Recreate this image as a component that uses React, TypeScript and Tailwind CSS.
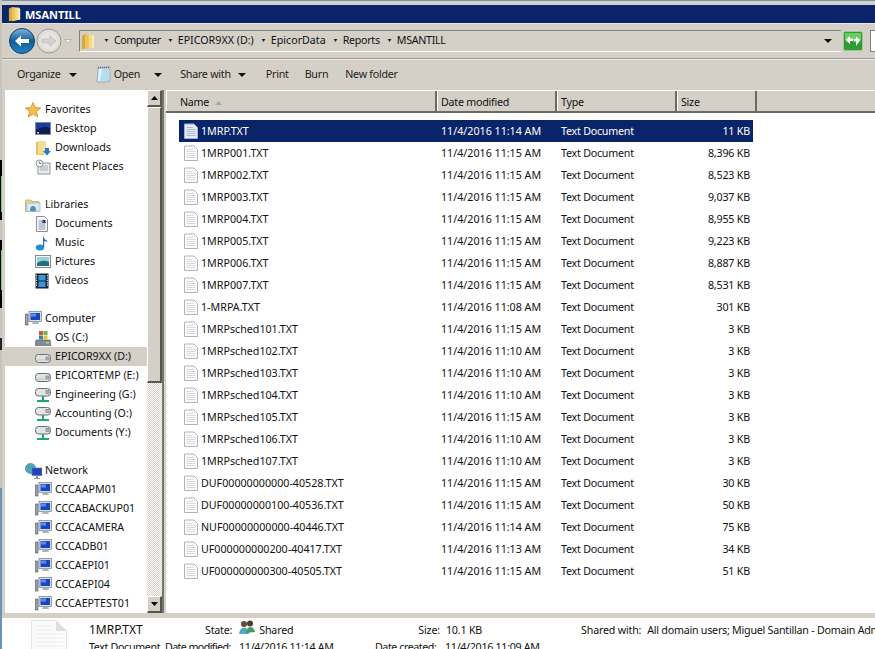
import React from "react";

const font = "font-['Noto_Sans','Liberation_Sans',sans-serif]";

function FolderIcon({ className = "size-4" }: { className?: string }) {
  return (
    <svg viewBox="0 0 16 20" className={className}>
      <path d="M1 3 L6 1 L6 18 L1 19 Z" fill="#d9a93a" />
      <path d="M5 2 L13 2 Q15 2 15 4 L15 17 L5 19 Z" fill="#f3db8a" />
      <path d="M5 2 L9 2 L9 18.2 L5 19 Z" fill="#eac45c" />
      <path d="M15 4 L15 17 L13 17.4 L13 3 Z" fill="#fff1c0" />
    </svg>
  );
}

function BackButton() {
  return (
    <svg viewBox="0 0 26 26" className="size-[26px] shrink-0">
      <defs>
        <linearGradient id="bk" x1="0" y1="0" x2="0" y2="1">
          <stop offset="0" stopColor="#7ab8e0" />
          <stop offset="0.5" stopColor="#135c95" />
          <stop offset="1" stopColor="#1f86c4" />
        </linearGradient>
      </defs>
      <circle cx="13" cy="13" r="12.5" fill="url(#bk)" stroke="#0e3f6b" />
      <path d="M6 13 L12 7.5 L12 11 L20 11 L20 15 L12 15 L12 18.5 Z" fill="#fff" />
    </svg>
  );
}

function ForwardButton() {
  return (
    <svg viewBox="0 0 26 26" className="size-[26px] shrink-0">
      <circle cx="13" cy="13" r="12" fill="#dedcd7" stroke="#9b9a96" />
      <circle cx="13" cy="13" r="9" fill="#e6e5e1" />
      <path d="M20 13 L14 8 L14 11 L6 11 L6 15 L14 15 L14 18 Z" fill="#d4d3cf" stroke="#bdbcb8" strokeWidth="0.7" />
    </svg>
  );
}

function Caret({ className = "" }: { className?: string }) {
  return (
    <svg viewBox="0 0 8 4" className={`h-1 w-2 shrink-0 ${className}`}>
      <path d="M0 0 H8 L4 4 Z" fill="#111" />
    </svg>
  );
}

function Crumb({ text, className = "" }: { text: string; className?: string }) {
  return (
    <div className="flex items-center">
      <svg viewBox="0 0 5 4" className="mr-[5px] h-[3px] w-[5px] shrink-0">
        <path d="M0 0 H5 L2.5 4 Z" fill="#222" />
      </svg>
      <span className={className}>{text}</span>
    </div>
  );
}

function RefreshIcon() {
  return (
    <svg viewBox="0 0 20 20" className="size-5 shrink-0">
      <rect x="0.5" y="0.5" width="19" height="19" rx="2" fill="#2e9e34" stroke="#9bc79a" />
      <rect x="2" y="2" width="16" height="7" fill="#6ccb63" />
      <path d="M2.5 9 L7 5 L7 7.5 L10 7.5 L10 10 L7 10 L7 13 Z" fill="#fff" />
      <path d="M17.5 9 L13 5.5 L13 8 L10.5 8 L10.5 10.5 L13 10.5 L13 15 Z" fill="#e8f6e8" />
    </svg>
  );
}

function NotepadIcon() {
  return (
    <svg viewBox="0 0 15 17" className="h-[17px] w-[15px] shrink-0">
      <path d="M2 2 L14 1 L14 15 Q8 17 1 16 Z" fill="#b8dcec" stroke="#86a6b6" strokeWidth="0.7" />
      <path d="M2 1.5 H14" stroke="#666" strokeWidth="1.4" strokeDasharray="1 1" />
      <path d="M3 3 L6 3 L4 15 L2 15 Z" fill="#e3f3fa" />
    </svg>
  );
}

function StarIcon() {
  return (
    <svg viewBox="0 0 16 16" className="size-4">
      <path d="M8 0.5 L10.2 5.6 L15.6 6 L11.4 9.5 L12.8 15 L8 12 L3.2 15 L4.6 9.5 L0.4 6 L5.8 5.6 Z" fill="#f4c04a" stroke="#c98a2a" strokeWidth="0.8" />
    </svg>
  );
}

function DesktopIcon() {
  return (
    <svg viewBox="0 0 16 14" className="h-[14px] w-4">
      <rect x="0.5" y="0.5" width="15" height="12" fill="#1a3f9a" stroke="#7f8a9e" />
      <path d="M1 8 Q8 3 15 6 L15 12 L1 12 Z" fill="#0d1f50" />
      <rect x="2" y="10" width="2" height="1.5" fill="#cfd8ea" />
    </svg>
  );
}

function DownloadsIcon() {
  return (
    <svg viewBox="0 0 16 16" className="size-4">
      <path d="M1 2 L9 2 L9 15 L1 15 Z" fill="#e6c25c" />
      <path d="M3 1 L10 1 Q11 1 11 2 L11 12 L3 15 Z" fill="#f4de96" />
      <path d="M10 8 H14 V11 H16 L12 15.5 L8 11 H10 Z" fill="#2a7cc0" />
    </svg>
  );
}

function RecentIcon() {
  return (
    <svg viewBox="0 0 16 16" className="size-4">
      <rect x="3" y="4" width="12" height="11" fill="#e8ecef" stroke="#8e979e" />
      <path d="M5 7 H13 M5 9 H13 M5 11 H13" stroke="#a8b0b6" />
      <circle cx="4.5" cy="4.5" r="3.5" fill="#f1f3f4" stroke="#8e979e" />
      <path d="M4.5 2.5 V4.5 H6.5" stroke="#666" fill="none" strokeWidth="0.8" />
    </svg>
  );
}

function LibrariesIcon() {
  return (
    <svg viewBox="0 0 16 14" className="h-[14px] w-4">
      <path d="M0.5 2 H6 L7 3.5 H14 V13.5 H0.5 Z" fill="#ecd68c" stroke="#c0a24e" strokeWidth="0.7" />
      <rect x="1.5" y="5" width="13.5" height="8.5" fill="#d8eaf0" stroke="#9cb2bc" strokeWidth="0.7" />
      <path d="M5 13 Q5 8 8 8 Q11 8 11 13 Z" fill="#4d8fb8" />
    </svg>
  );
}

function DocIcon() {
  return (
    <svg viewBox="0 0 14 16" className="h-4 w-[14px]">
      <path d="M1.5 0.5 H9.5 L12.5 3.5 V15.5 H1.5 Z" fill="#fafafa" stroke="#8b8f94" />
      <path d="M3.5 5 H8 M3.5 7 H10.5 M3.5 9 H10.5 M3.5 11 H10.5 M3.5 13 H10.5" stroke="#5d7fa6" strokeWidth="0.8" />
      <rect x="7.5" y="4" width="3" height="3" fill="#203a78" />
    </svg>
  );
}

function MusicIcon() {
  return (
    <svg viewBox="0 0 14 17" className="h-[17px] w-[14px]">
      <ellipse cx="5" cy="13.5" rx="4.2" ry="3" fill="#1f8ed0" />
      <path d="M8 13 V1 Q8.5 5 12.5 7 Q11 8.5 9.2 7 V13 Z" fill="#1e74b5" />
    </svg>
  );
}

function PicturesIcon() {
  return (
    <svg viewBox="0 0 16 13" className="h-[13px] w-4">
      <rect x="0.5" y="0.5" width="15" height="12" fill="#f2f4f5" stroke="#808a92" />
      <rect x="2" y="2" width="12" height="9" fill="#9ad0d8" />
      <path d="M2 8 Q8 4 14 7 V11 H2 Z" fill="#24707c" />
    </svg>
  );
}

function VideosIcon() {
  return (
    <svg viewBox="0 0 14 16" className="h-4 w-[14px]">
      <rect x="0.5" y="0.5" width="13" height="15" fill="#1c2430" />
      <rect x="3.5" y="2" width="7" height="5.5" fill="#3a96d8" />
      <rect x="3.5" y="8.5" width="7" height="5.5" fill="#3a96d8" />
      <path d="M1.5 2 V14 M12.5 2 V14" stroke="#d8dde2" strokeWidth="1.2" strokeDasharray="1.2 1.2" />
    </svg>
  );
}

function ComputerIcon() {
  return (
    <svg viewBox="0 0 17 15" className="h-[15px] w-[17px]">
      <rect x="0.5" y="3" width="2.5" height="11" fill="#9aa2a8" stroke="#4f5a62" strokeWidth="0.6" />
      <rect x="4" y="0.5" width="12.5" height="10" fill="#d5dfe8" stroke="#6e7a86" strokeWidth="0.7" />
      <rect x="5.5" y="2" width="9.5" height="7" fill="#1a44c0" />
      <rect x="6" y="2.5" width="5" height="3" fill="#5d8ce8" />
      <path d="M8 10.5 H13 L14 13 H7 Z" fill="#aab4bc" />
    </svg>
  );
}

function OsDriveIcon() {
  return (
    <svg viewBox="0 0 16 16" className="size-4">
      <rect x="4" y="1" width="4" height="4" fill="#d9532c" />
      <rect x="8.5" y="1" width="4" height="4" fill="#6cb63c" />
      <rect x="4" y="5.5" width="4" height="4" fill="#3a78c8" />
      <rect x="8.5" y="5.5" width="4" height="4" fill="#f0c030" />
      <path d="M1 10 H15 L16 15.5 H0 Z" fill="#7d8c99" stroke="#4d5a66" strokeWidth="0.6" />
      <rect x="11" y="12" width="3" height="1.5" fill="#b8e060" />
    </svg>
  );
}

function DriveIcon() {
  return (
    <svg viewBox="0 0 16 9" className="mt-[3px] h-[9px] w-4">
      <rect x="0.5" y="0.5" width="15" height="8" rx="3" fill="#e2e4e4" stroke="#686e72" />
      <rect x="11" y="3" width="3" height="3" fill="#b5bcc0" stroke="#50585c" strokeWidth="0.5" />
      <rect x="2" y="5.5" width="8" height="1" fill="#bcc0c2" />
    </svg>
  );
}

function NetDriveIcon() {
  return (
    <svg viewBox="0 0 16 14" className="h-[14px] w-4">
      <rect x="0.5" y="0.5" width="15" height="7.5" rx="3" fill="#e2e4e4" stroke="#686e72" />
      <rect x="11" y="2.5" width="3" height="3" fill="#b5bcc0" stroke="#50585c" strokeWidth="0.5" />
      <path d="M8 8 V12 M2 13 H14" stroke="#1fa86a" strokeWidth="2" />
    </svg>
  );
}

function NetworkIcon() {
  return (
    <svg viewBox="0 0 17 16" className="h-4 w-[17px]">
      <circle cx="5.5" cy="5.5" r="5" fill="#49a8d8" stroke="#2a6f96" strokeWidth="0.6" />
      <path d="M2 4 Q4 2 6 3 L5 6 L3 7 Z M7 6 L10 5 L9 9 L7 9 Z" fill="#58b04a" />
      <rect x="7" y="5" width="10" height="7.5" fill="#1a44c0" stroke="#6e7a86" strokeWidth="0.7" />
      <path d="M11 12.5 H13 V15 H15 V16 H9 V15 H11 Z" fill="#8a96a0" />
    </svg>
  );
}

function FileIcon({ selected }: { selected?: boolean }) {
  return (
    <svg viewBox="0 0 14 16" className="h-4 w-[14px] shrink-0">
      <path d="M0.5 1 H10 L13.5 4.5 V15.5 H0.5 Z" fill={selected ? "#e8edf5" : "#fbfbfb"} stroke={selected ? "#9fb0ce" : "#b4b4b4"} />
      <path d="M2.5 4.5 H9 M2.5 6.5 H11.5 M2.5 8.5 H11.5 M2.5 10.5 H11.5 M2.5 12.5 H11.5" stroke={selected ? "#a9bbd6" : "#d8dadd"} />
    </svg>
  );
}

function BigFileIcon() {
  return (
    <svg viewBox="0 0 36 36" className="h-9 w-9 shrink-0">
      <path d="M0.5 0.5 H25 L35.5 11 V36 H0.5 Z" fill="#fafafa" stroke="#e4e4e4" />
      <path d="M25 0.5 L25 11 L35.5 11 Z" fill="#dedede" />
      <path d="M4 6 H22 M4 10 H22 M4 14 H32 M4 18 H32 M4 22 H32 M4 26 H32 M4 30 H32" stroke="#eeeeee" />
    </svg>
  );
}

function SharedIcon() {
  return (
    <svg viewBox="0 0 16 15" className="h-[15px] w-4 shrink-0">
      <circle cx="5" cy="4" r="3" fill="#6b4a32" />
      <circle cx="11" cy="3.5" r="3" fill="#4b3a30" />
      <path d="M0 14 Q1 7.5 5 7.5 Q9 7.5 10 14 Z" fill="#4fa8c8" />
      <path d="M7 13 Q8 7 11 7 Q15 7 16 12 Z" fill="#3f9a6c" />
    </svg>
  );
}

function ScrollButton({ up }: { up?: boolean }) {
  return (
    <div className="flex h-[17px] w-[15px] shrink-0 items-center justify-center border-t border-l border-t-white border-l-white border-b-2 border-r-2 border-b-[#57554f] border-r-[#57554f] bg-[#d4d0c8]">
      <svg viewBox="0 0 7 4" className="h-1 w-[7px]">
        <path d={up ? "M0 4 H7 L3.5 0 Z" : "M0 0 H7 L3.5 4 Z"} fill="#000" />
      </svg>
    </div>
  );
}

type NavItem = { icon: React.ReactNode; label: string; head?: boolean; active?: boolean };

const favorites: NavItem[] = [
  { icon: <StarIcon />, label: "Favorites", head: true },
  { icon: <DesktopIcon />, label: "Desktop" },
  { icon: <DownloadsIcon />, label: "Downloads" },
  { icon: <RecentIcon />, label: "Recent Places" },
];
const libraries: NavItem[] = [
  { icon: <LibrariesIcon />, label: "Libraries", head: true },
  { icon: <DocIcon />, label: "Documents" },
  { icon: <MusicIcon />, label: "Music" },
  { icon: <PicturesIcon />, label: "Pictures" },
  { icon: <VideosIcon />, label: "Videos" },
];
const computer: NavItem[] = [
  { icon: <ComputerIcon />, label: "Computer", head: true },
  { icon: <OsDriveIcon />, label: "OS (C:)" },
  { icon: <DriveIcon />, label: "EPICOR9XX (D:)", active: true },
  { icon: <DriveIcon />, label: "EPICORTEMP (E:)" },
  { icon: <NetDriveIcon />, label: "Engineering (G:)" },
  { icon: <NetDriveIcon />, label: "Accounting (O:)" },
  { icon: <NetDriveIcon />, label: "Documents (Y:)" },
];
const network: NavItem[] = [
  { icon: <NetworkIcon />, label: "Network", head: true },
  ...["CCCAAPM01", "CCCABACKUP01", "CCCACAMERA", "CCCADB01", "CCCAEPI01", "CCCAEPI04", "CCCAEPTEST01"].map((label) => ({
    icon: <ComputerIcon />,
    label,
  })),
];

function NavRow({ item }: { item: NavItem }) {
  return (
    <div className={`flex h-[19px] items-center ${item.active ? "bg-[#d4d0c8]" : ""}`}>
      <div className={`flex w-[20px] shrink-0 justify-start ${item.head ? "ml-5" : "ml-[30px]"}`}>{item.icon}</div>
      <span className="whitespace-nowrap">{item.label}</span>
    </div>
  );
}

const files: [string, string, string][] = [
  ["1MRP.TXT", "11/4/2016 11:14 AM", "11 KB"],
  ["1MRP001.TXT", "11/4/2016 11:15 AM", "8,396 KB"],
  ["1MRP002.TXT", "11/4/2016 11:15 AM", "8,523 KB"],
  ["1MRP003.TXT", "11/4/2016 11:15 AM", "9,037 KB"],
  ["1MRP004.TXT", "11/4/2016 11:15 AM", "8,955 KB"],
  ["1MRP005.TXT", "11/4/2016 11:15 AM", "9,223 KB"],
  ["1MRP006.TXT", "11/4/2016 11:15 AM", "8,887 KB"],
  ["1MRP007.TXT", "11/4/2016 11:15 AM", "8,531 KB"],
  ["1-MRPA.TXT", "11/4/2016 11:08 AM", "301 KB"],
  ["1MRPsched101.TXT", "11/4/2016 11:15 AM", "3 KB"],
  ["1MRPsched102.TXT", "11/4/2016 11:10 AM", "3 KB"],
  ["1MRPsched103.TXT", "11/4/2016 11:10 AM", "3 KB"],
  ["1MRPsched104.TXT", "11/4/2016 11:10 AM", "3 KB"],
  ["1MRPsched105.TXT", "11/4/2016 11:15 AM", "3 KB"],
  ["1MRPsched106.TXT", "11/4/2016 11:10 AM", "3 KB"],
  ["1MRPsched107.TXT", "11/4/2016 11:10 AM", "3 KB"],
  ["DUF00000000000-40528.TXT", "11/4/2016 11:15 AM", "30 KB"],
  ["DUF00000000100-40536.TXT", "11/4/2016 11:15 AM", "50 KB"],
  ["NUF00000000000-40446.TXT", "11/4/2016 11:14 AM", "75 KB"],
  ["UF000000000200-40417.TXT", "11/4/2016 11:13 AM", "34 KB"],
  ["UF000000000300-40505.TXT", "11/4/2016 11:15 AM", "51 KB"],
];

function HeaderCell({ width, children }: { width: string; children?: React.ReactNode }) {
  return (
    <div className={`flex h-full shrink-0 items-center border-r-2 border-r-[#6b6962] border-l border-l-white pl-[3px] pt-[3px] tracking-[-0.25px] ${width}`}>{children}</div>
  );
}

// bits of whatever sits behind the window on the left edge
const behind = [
  "h-[160px] bg-[#c9c5bd]",
  "h-[16px] bg-black",
  "h-[36px] bg-[#7fd07f] border-l border-l-black",
  "h-[8px] bg-black",
  "h-[20px] bg-[#c9c5bd]",
  "h-[10px] bg-black",
  "h-[40px] bg-[#7fd07f] border-l border-l-black",
  "h-[18px] bg-black",
  "h-[30px] bg-[#c9c5bd]",
  "h-[12px] bg-[#222222]",
  "h-[138px] bg-[#c9c5bd]",
  "h-[161px] bg-[#6d93b5]",
];

export default function App() {
  return (
    <div className={`flex h-[649px] w-[875px] overflow-hidden bg-[#d4d0c8] text-[10.7px] leading-none text-[#111] ${font}`}>
      <div className="flex w-[2px] shrink-0 flex-col">
        {behind.map((c, i) => (
          <div key={i} className={`shrink-0 ${c}`} />
        ))}
      </div>

      <div className="flex min-w-0 flex-1 flex-col">
        {/* frame top */}
        <div className="h-[1px] shrink-0 bg-[#6d93b5]" />
        <div className="h-[4px] shrink-0" />

        {/* title bar */}
        <div className="flex h-[18px] shrink-0 items-center bg-[#0a246a] pl-[6px] font-bold text-white">
          <FolderIcon className="h-[16px] w-[13px] shrink-0" />
          <span className="ml-[4px] text-[11px]">MSANTILL</span>
        </div>
        <div className="h-[1px] shrink-0 bg-[#e6e4df]" />

        {/* address bar */}
        <div className="flex h-[35px] shrink-0 items-center border-b border-b-[#9c9a94] pl-[7px]">
          <BackButton />
          <div className="ml-[1px]">
            <ForwardButton />
          </div>
          <svg viewBox="0 0 8 5" className="ml-[2px] h-[5px] w-2 shrink-0">
            <path d="M0.5 0.5 H7.5 L4 4.5 Z" fill="#f4f3f1" stroke="#a2a09a" strokeWidth="0.7" />
          </svg>
          <div className="ml-[7px] flex h-[22px] w-[762px] shrink-0 items-center border-t border-l border-t-[#85837d] border-l-[#85837d] border-b border-b-white pl-[1px]">
            <FolderIcon className="h-[17px] w-[14px] shrink-0" />
            <div className="ml-[9px] flex items-center gap-[7px] whitespace-nowrap pb-[1px]">
              <Crumb text="Computer" className="tracking-[-0.5px]" />
              <Crumb text="EPICOR9XX (D:)" />
              <Crumb text="EpicorData" />
              <Crumb text="Reports" className="tracking-[-0.3px]" />
              <Crumb text="MSANTILL" className="tracking-[-0.3px]" />
            </div>
            <Caret className="ml-auto mr-[9px]" />
          </div>
          <div className="ml-[2px]">
            <RefreshIcon />
          </div>
          <div className="ml-[7px] h-[22px] w-20 shrink-0 border border-[#85837d] bg-white" />
        </div>

        {/* toolbar */}
        <div className="flex h-[31px] shrink-0 items-center border-t border-t-[#eceae6] pb-[1px] pl-[15px] tracking-[-0.25px] text-[#222]">
          <span>Organize</span>
          <Caret className="ml-[8px]" />
          <div className="ml-[19px]">
            <NotepadIcon />
          </div>
          <span className="ml-[3px]">Open</span>
          <Caret className="ml-[14px]" />
          <span className="ml-[18px]">Share with</span>
          <Caret className="ml-[7px]" />
          <span className="ml-[20px]">Print</span>
          <span className="ml-[16px]">Burn</span>
          <span className="ml-[17px]">New folder</span>
        </div>

        {/* body */}
        <div className="flex min-h-0 flex-1">
          <div className="ml-[3px] flex w-[142px] shrink-0 flex-col overflow-hidden bg-white pt-[10px]">
            <div className="flex flex-col gap-[19px]">
              {[favorites, libraries, computer, network].map((group, i) => (
                <div key={i}>
                  {group.map((item) => (
                    <NavRow key={item.label} item={item} />
                  ))}
                </div>
              ))}
            </div>
          </div>

          <div className="flex w-[15px] shrink-0 flex-col bg-[repeating-conic-gradient(#ffffff_0_25%,#d4d0c8_0_50%)] bg-[length:2px_2px]">
            <ScrollButton up />
            <div className="h-[276px] shrink-0 border-t border-l border-t-white border-l-white border-b-2 border-r-2 border-b-[#57554f] border-r-[#57554f] bg-[#d4d0c8]" />
            <div className="flex-1" />
            <ScrollButton />
          </div>

          <div className="flex w-[4px] shrink-0 flex-col">
            <div className="w-[2px] flex-1 bg-[#77756f]" />
          </div>

          <div className="flex min-w-0 flex-1 flex-col bg-white">
            <div className="flex h-[23px] shrink-0 items-center border-b-2 border-b-[#6b6962] bg-[#d4d0c8] border-t border-t-white">
              <div className="flex h-full w-[271px] shrink-0 items-center border-r-2 border-r-[#6b6962] border-l border-l-white pl-[13px] pt-[3px] tracking-[-0.25px]">
                <span>Name</span>
                <svg viewBox="0 0 7 4" className="ml-[6px] h-1 w-[7px]">
                  <path d="M0 4 H7 L3.5 0 Z" fill="#aaa8a2" />
                </svg>
              </div>
              <HeaderCell width="w-[120px]">Date modified</HeaderCell>
              <HeaderCell width="w-[120px]">Type</HeaderCell>
              <HeaderCell width="w-[80px]">Size</HeaderCell>
            </div>

            <div className="flex flex-col pl-[13px] pt-[7px]">
              {files.map(([name, date, size], i) => (
                <div
                  key={name}
                  className={`flex h-[22px] w-[574px] shrink-0 items-center ${i === 0 ? "bg-[#0a246a] text-white" : ""}`}
                >
                  <div className="ml-[5px]">
                    <FileIcon selected={i === 0} />
                  </div>
                  <span className="ml-[3px] w-[240px] shrink-0 whitespace-nowrap">{name}</span>
                  <span className="w-[120px] shrink-0 whitespace-nowrap">{date}</span>
                  <span className="w-[110px] shrink-0 whitespace-nowrap tracking-[-0.23px]">Text Document</span>
                  <span className="w-[79px] shrink-0 whitespace-nowrap text-right tracking-[-0.2px]">{size}</span>
                </div>
              ))}
            </div>
          </div>
        </div>

        {/* status bar */}
        <div className="h-[5px] shrink-0 bg-[#d4d0c8]" />
        <div className="flex h-[31px] shrink-0 overflow-hidden bg-white pl-[29px] pt-[2px]">
          <BigFileIcon />
          <div className="ml-[22px] flex flex-col tracking-[-0.2px]">
            <div className="flex h-[20px] shrink-0 items-center whitespace-nowrap">
              <span className="w-[116px] text-xs tracking-normal">1MRP.TXT</span>
              <span>State:</span>
              <div className="ml-[7px] -mt-[5px]">
                <SharedIcon />
              </div>
              <span className="ml-[4px]">Shared</span>
              <span className="ml-[125px]">Size:</span>
              <span className="ml-[6px]">10.1 KB</span>
              <span className="ml-[99px]">Shared with:</span>
              <span className="ml-[6px] tracking-[-0.24px]">All domain users; Miguel Santillan - Domain Admins</span>
            </div>
            <div className="flex h-[14px] shrink-0 items-center whitespace-nowrap">
              <span className="w-[76px] tracking-[-0.35px]">Text Document</span>
              <span className="w-[74px] tracking-[-0.6px]">Date modified:</span>
              <span className="w-[136px] tracking-[-0.3px]">11/4/2016 11:14 AM</span>
              <span className="w-[70px] tracking-[-0.45px]">Date created:</span>
              <span className="tracking-[-0.3px]">11/4/2016 11:09 AM</span>
            </div>
          </div>
        </div>
      </div>
    </div>
  );
}
